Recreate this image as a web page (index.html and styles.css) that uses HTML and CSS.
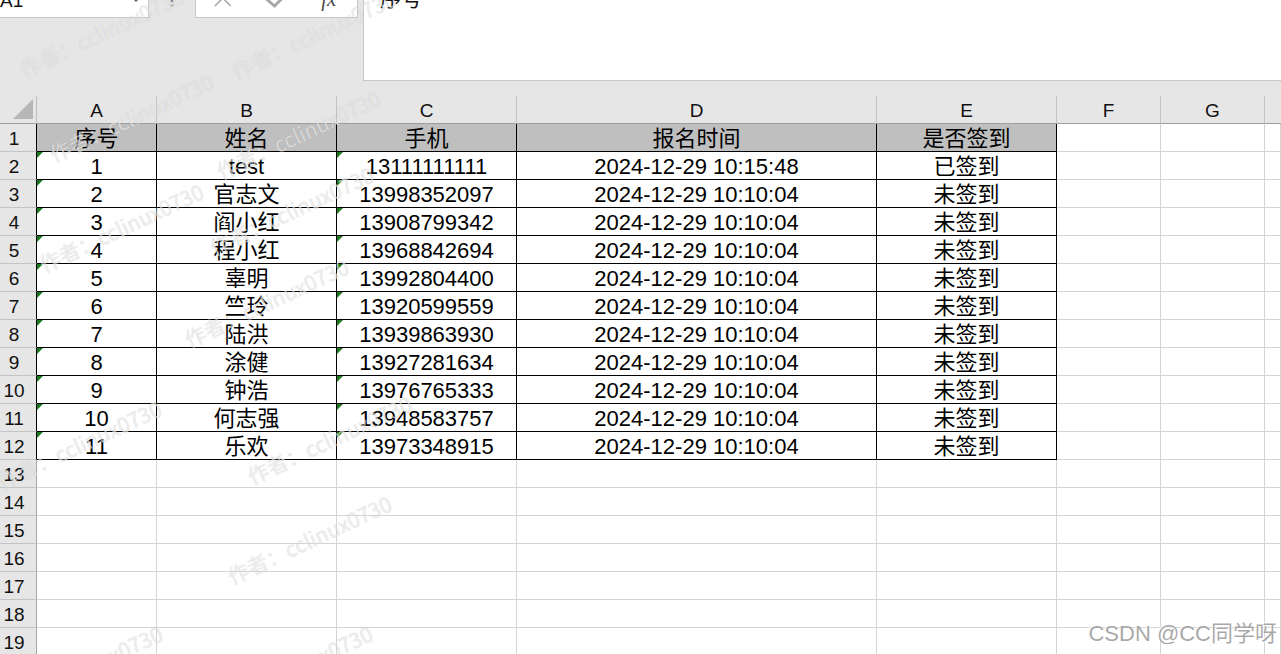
FILE: index.html
```html
<!DOCTYPE html>
<html lang="zh-CN">
<head>
<meta charset="utf-8">
<title>报名表</title>
<link rel="stylesheet" href="styles.css">
</head>
<body>
<div class="top">
  <div class="namebox"><span class="ref">A1</span><span class="caret"></span></div>
  <div class="dots"><svg width="4" height="10" viewBox="0 0 4 10"><circle cx="2" cy="0.8" r="1.4" fill="#8a8a8a"/><circle cx="2" cy="5.6" r="1.4" fill="#8a8a8a"/></svg></div>
  <div class="fbtns">
    <svg width="162" height="17" viewBox="0 0 162 17">
      <path d="M19 -10 L35 6 M35 -10 L19 6" stroke="#a8a8a8" stroke-width="1.6" fill="none"/>
      <path d="M71 -1 L79 6 L94 -9" stroke="#a8a8a8" stroke-width="3" fill="none" stroke-linejoin="miter"/>
      <text x="126" y="6" class="fx">fx</text>
    </svg>
  </div>
  <div class="fbar"><span class="ftext">序号</span></div>
</div>

<div class="sheet">
  <div class="corner"><svg width="22" height="22" viewBox="0 0 22 22"><path d="M1 21 L21 21 L21 1 Z" fill="#b6b6b6"/></svg></div>
  <div class="ch">A</div><div class="ch">B</div><div class="ch">C</div><div class="ch">D</div><div class="ch">E</div><div class="ch">F</div><div class="ch">G</div><div class="ch last"></div>

  <div class="rh tb">1</div>
  <div class="c t h">序号</div><div class="c t h">姓名</div><div class="c t h">手机</div><div class="c t h">报名时间</div><div class="c t h">是否签到</div><div class="c"></div><div class="c"></div><div class="c"></div>

  <div class="rh tb">2</div>
  <div class="c t g">1</div><div class="c t">test</div><div class="c t g">13111111111</div><div class="c t">2024-12-29 10:15:48</div><div class="c t">已签到</div><div class="c"></div><div class="c"></div><div class="c"></div>

  <div class="rh tb">3</div>
  <div class="c t g">2</div><div class="c t">官志文</div><div class="c t g">13998352097</div><div class="c t">2024-12-29 10:10:04</div><div class="c t">未签到</div><div class="c"></div><div class="c"></div><div class="c"></div>

  <div class="rh tb">4</div>
  <div class="c t g">3</div><div class="c t">阎小红</div><div class="c t g">13908799342</div><div class="c t">2024-12-29 10:10:04</div><div class="c t">未签到</div><div class="c"></div><div class="c"></div><div class="c"></div>

  <div class="rh tb">5</div>
  <div class="c t g">4</div><div class="c t">程小红</div><div class="c t g">13968842694</div><div class="c t">2024-12-29 10:10:04</div><div class="c t">未签到</div><div class="c"></div><div class="c"></div><div class="c"></div>

  <div class="rh tb">6</div>
  <div class="c t g">5</div><div class="c t">辜明</div><div class="c t g">13992804400</div><div class="c t">2024-12-29 10:10:04</div><div class="c t">未签到</div><div class="c"></div><div class="c"></div><div class="c"></div>

  <div class="rh tb">7</div>
  <div class="c t g">6</div><div class="c t">竺玲</div><div class="c t g">13920599559</div><div class="c t">2024-12-29 10:10:04</div><div class="c t">未签到</div><div class="c"></div><div class="c"></div><div class="c"></div>

  <div class="rh tb">8</div>
  <div class="c t g">7</div><div class="c t">陆洪</div><div class="c t g">13939863930</div><div class="c t">2024-12-29 10:10:04</div><div class="c t">未签到</div><div class="c"></div><div class="c"></div><div class="c"></div>

  <div class="rh tb">9</div>
  <div class="c t g">8</div><div class="c t">涂健</div><div class="c t g">13927281634</div><div class="c t">2024-12-29 10:10:04</div><div class="c t">未签到</div><div class="c"></div><div class="c"></div><div class="c"></div>

  <div class="rh tb">10</div>
  <div class="c t g">9</div><div class="c t">钟浩</div><div class="c t g">13976765333</div><div class="c t">2024-12-29 10:10:04</div><div class="c t">未签到</div><div class="c"></div><div class="c"></div><div class="c"></div>

  <div class="rh tb">11</div>
  <div class="c t g">10</div><div class="c t">何志强</div><div class="c t g">13948583757</div><div class="c t">2024-12-29 10:10:04</div><div class="c t">未签到</div><div class="c"></div><div class="c"></div><div class="c"></div>

  <div class="rh tb">12</div>
  <div class="c t g">11</div><div class="c t">乐欢</div><div class="c t g">13973348915</div><div class="c t">2024-12-29 10:10:04</div><div class="c t">未签到</div><div class="c"></div><div class="c"></div><div class="c"></div>

  <div class="rh">13</div><div class="c"></div><div class="c"></div><div class="c"></div><div class="c"></div><div class="c"></div><div class="c"></div><div class="c"></div><div class="c"></div>
  <div class="rh">14</div><div class="c"></div><div class="c"></div><div class="c"></div><div class="c"></div><div class="c"></div><div class="c"></div><div class="c"></div><div class="c"></div>
  <div class="rh">15</div><div class="c"></div><div class="c"></div><div class="c"></div><div class="c"></div><div class="c"></div><div class="c"></div><div class="c"></div><div class="c"></div>
  <div class="rh">16</div><div class="c"></div><div class="c"></div><div class="c"></div><div class="c"></div><div class="c"></div><div class="c"></div><div class="c"></div><div class="c"></div>
  <div class="rh">17</div><div class="c"></div><div class="c"></div><div class="c"></div><div class="c"></div><div class="c"></div><div class="c"></div><div class="c"></div><div class="c"></div>
  <div class="rh">18</div><div class="c"></div><div class="c"></div><div class="c"></div><div class="c"></div><div class="c"></div><div class="c"></div><div class="c"></div><div class="c"></div>
  <div class="rh">19</div><div class="c"></div><div class="c"></div><div class="c"></div><div class="c"></div><div class="c"></div><div class="c"></div><div class="c"></div><div class="c"></div>
</div>

<div class="marks">
  <span class="wm w1">作者：cclinux0730</span>
  <span class="wm w2">作者：cclinux0730</span>
  <span class="wm w3">作者：cclinux0730</span>
  <span class="wm w4">作者：cclinux0730</span>
  <span class="wm w5">作者：cclinux0730</span>
  <span class="wm w6">作者：cclinux0730</span>
  <span class="wm w7">作者：cclinux0730</span>
  <span class="wm w8">作者：cclinux0730</span>
  <span class="wm w9">作者：cclinux0730</span>
  <span class="wm w10">作者：cclinux0730</span>
  <span class="wm w11">作者：cclinux0730</span>
  <span class="wm w12">作者：cclinux0730</span>
  <span class="csdn">CSDN @CC同学呀</span>
</div>
</body>
</html>
```

FILE: styles.css
```css
* { box-sizing: border-box; }
html, body { margin: 0; padding: 0; }
body {
  width: 1281px;
  height: 654px;
  overflow: hidden;
  position: relative;
  background: #e6e6e6;
  font-family: "Liberation Sans", "Noto Sans CJK SC", sans-serif;
  color: #000;
}

/* ---------- top (name box / formula bar) ---------- */
.top {
  height: 96px;
  display: flex;
  align-items: flex-start;
}
.namebox {
  width: 149px;
  height: 18px;
  background: #fff;
  border-right: 1px solid #c6c6c6;
  border-bottom: 1px solid #c6c6c6;
  position: relative;
  overflow: hidden;
}
.ref {
  display: block;
  font-size: 19px;
  line-height: 20px;
  margin-top: -9px;
  color: #111;
}
.caret {
  position: absolute;
  left: 133px;
  top: -1px;
  width: 0;
  height: 0;
  border-left: 3px solid transparent;
  border-right: 3px solid transparent;
  border-top: 3px solid #666;
}
.dots {
  width: 4px;
  height: 10px;
  margin-left: 21px;
  margin-right: 21px;
  display: flex;
}
.fbtns {
  width: 163px;
  height: 18px;
  background: #fff;
  border: 1px solid #c6c6c6;
  border-top: none;
  display: flex;
}
.fx {
  font-family: "Liberation Serif", serif;
  font-style: italic;
  font-size: 21px;
  fill: #4a4a4a;
}
.fbar {
  flex: 1;
  margin-left: 5px;
  height: 81px;
  background: #fff;
  border-left: 1px solid #c6c6c6;
  border-bottom: 1px solid #c6c6c6;
  padding-left: 16px;
}
.ftext {
  display: block;
  font-size: 21px;
  line-height: 21px;
  margin-top: -12px;
  color: #111;
}

/* ---------- sheet grid ---------- */
.sheet {
  display: grid;
  grid-template-columns: 37px 120px 180px 180px 360px 180px 104px 104px 1fr;
  grid-auto-rows: 28px;
}
.corner {
  background: #e6e6e6;
  border-right: 1px solid #bcbcbc;
  border-bottom: 1px solid #9e9e9e;
  display: flex;
  align-items: flex-end;
  justify-content: flex-end;
  padding: 0 2px 3px 0;
}
.ch {
  background: #e6e6e6;
  border-right: 1px solid #c4c4c4;
  border-bottom: 1px solid #9e9e9e;
  display: flex;
  align-items: center;
  justify-content: center;
  font-size: 19px;
  padding-top: 3px;
  color: #111;
}
.ch.last { border-right: none; }
.rh {
  background: #e6e6e6;
  border-right: 1px solid #a6a6a6;
  border-bottom: 1px solid #c4c4c4;
  display: flex;
  align-items: center;
  justify-content: center;
  padding: 3px 8px 0 0;
  font-size: 19px;
  line-height: 24px;
  color: #111;
}
.rh.tb { border-right-color: #000; }

.c {
  background: #fff;
  border-right: 1px solid #d4d4d4;
  border-bottom: 1px solid #d4d4d4;
  display: flex;
  align-items: center;
  justify-content: center;
  padding-top: 3px;
  font-size: 22px;
  line-height: 24px;
  white-space: nowrap;
  position: relative;
}
.c.t {
  border-right-color: #000;
  border-bottom-color: #000;
}
.c.h { background: #bfbfbf; }
.c.g::before {
  content: "";
  position: absolute;
  left: 0;
  top: 0;
  width: 0;
  height: 0;
  border-top: 6px solid #1f7a1f;
  border-right: 6px solid transparent;
}

/* ---------- watermarks ---------- */
.marks {
  position: absolute;
  left: 0;
  top: 0;
  width: 1281px;
  height: 654px;
  overflow: hidden;
  pointer-events: none;
}
.wm {
  position: absolute;
  font-family: "Noto Sans CJK SC", sans-serif;
  font-size: 21px;
  line-height: 21px;
  white-space: nowrap;
  color: rgba(255, 255, 255, 0.6);
  text-shadow: 0 0 1px rgba(0, 0, 0, 0.2);
  transform: rotate(-25deg);
  transform-origin: 0 100%;
}
.w1 { left: 25px; top: 59px; }
.w2 { left: 237px; top: 61px; }
.w3 { left: 55px; top: 144px; }
.w4 { left: 222px; top: 161px; }
.w5 { left: 45px; top: 254px; }
.w6 { left: 215px; top: 237px; }
.w7 { left: 190px; top: 329px; }
.w8 { left: 3px; top: 471px; }
.w9 { left: 253px; top: 466px; }
.w10 { left: 233px; top: 566px; }
.w11 { left: 4px; top: 696px; }
.w12 { left: 214px; top: 696px; }

.csdn {
  position: absolute;
  right: 4px;
  bottom: 8px;
  font-family: "Liberation Sans", "Noto Sans CJK SC", sans-serif;
  font-size: 22px;
  line-height: 24px;
  color: rgba(140, 140, 140, 0.75);
  text-shadow: 1px 1px 1px rgba(255, 255, 255, 0.9), -1px -1px 1px rgba(255, 255, 255, 0.9);
}
```
